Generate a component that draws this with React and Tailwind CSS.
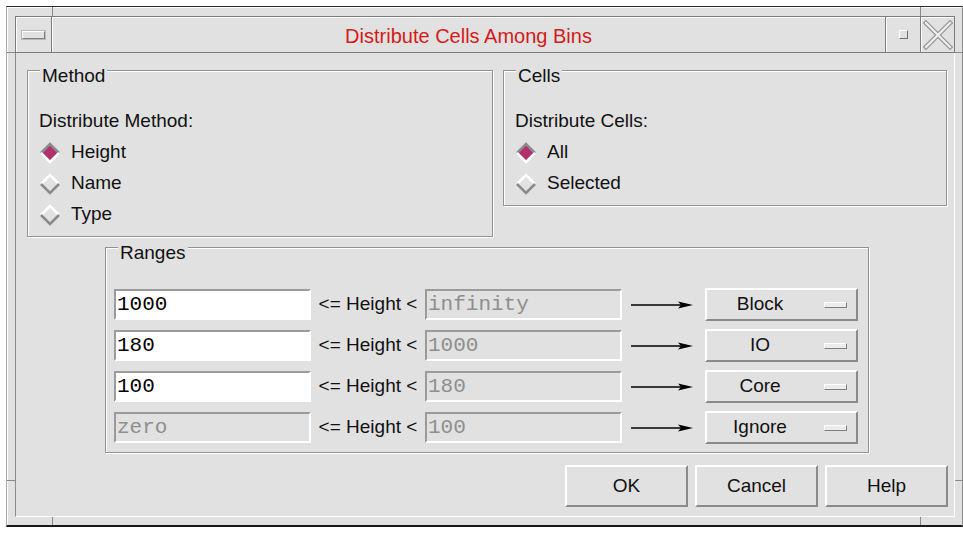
import React from "react";

const BG = "bg-[#e1e1e1]";

function Diamond({ on }) {
  return (
    <svg width="22" height="22" viewBox="0 0 22 22" className="shrink-0">
      <polygon points="11,2 20,11 11,20 2,11" fill={on ? "#b3306a" : "none"} />
      <polyline points="2,11 11,2 20,11" fill="none" stroke={on ? "#8a8a8a" : "#ffffff"} strokeWidth="2.5" />
      <polyline points="2,11 11,20 20,11" fill="none" stroke={on ? "#ffffff" : "#8a8a8a"} strokeWidth="2.5" />
    </svg>
  );
}

function Radio({ on, label }) {
  return (
    <div className="flex h-[31px] items-center gap-[10px]">
      <Diamond on={on} />
      <span>{label}</span>
    </div>
  );
}

function GroupBox({ title, className, children }) {
  return (
    <div
      className={
        "relative border border-[#929292] shadow-[inset_1px_1px_0_#ffffff,1px_1px_0_#ffffff] " +
        className
      }
    >
      <span className={"absolute left-[12px] top-[-6px] px-[2px] leading-[22px] " + BG}>{title}</span>
      {children}
    </div>
  );
}

function Field({ value, enabled }) {
  return (
    <div
      className={
        "flex h-[31px] w-[197px] shrink-0 items-center border-2 border-t-[#9b9b9b] border-l-[#9b9b9b] border-b-white border-r-white pl-[1px] font-['Liberation_Mono','Courier_New',monospace] text-[21px] " +
        (enabled ? "bg-white text-black" : "bg-[#e1e1e1] text-[#8e8e8e]")
      }
    >
      {value}
    </div>
  );
}

function Arrow() {
  return (
    <svg width="63" height="10" viewBox="0 0 63 10" className="ml-[9px] shrink-0">
      <line x1="0" y1="5" x2="54" y2="5" stroke="#000" strokeWidth="1.3" />
      <polygon points="47,1.5 62,5 47,8.5 50,5" fill="#000" />
    </svg>
  );
}

function OptionButton({ label }) {
  return (
    <div className="ml-[11px] flex h-[33px] w-[153px] shrink-0 items-center border-2 border-t-white border-l-white border-b-[#8a8a8a] border-r-[#8a8a8a]">
      <span className="w-[106px] text-center">{label}</span>
      <span className="ml-[11px] h-[6px] w-[23px] border border-t-white border-l-white border-b-[#7f7f7f] border-r-[#7f7f7f] bg-[#ececec]" />
    </div>
  );
}

function RangeRow({ low, lowOn, high, bin }) {
  return (
    <div className="flex h-[31px] items-center">
      <Field value={low} enabled={lowOn} />
      <span className="w-[114px] shrink-0 text-center">&lt;= Height &lt;</span>
      <Field value={high} enabled={false} />
      <Arrow />
      <OptionButton label={bin} />
    </div>
  );
}

function PushButton({ label }) {
  return (
    <div className="flex h-[42px] w-[123px] items-center justify-center border-2 border-t-white border-l-white border-b-[#8a8a8a] border-r-[#8a8a8a]">
      {label}
    </div>
  );
}

export default function App() {
  return (
    <div className="h-[543px] w-[963px] overflow-hidden bg-white pl-[6px] pt-[6px] font-['Liberation_Sans',Arial,sans-serif] text-[19px] text-[#111]">
      {/* window frame */}
      <div
        className={
          "relative flex h-[521px] w-[957px] flex-col border-t border-l border-r border-b-2 border-t-[#2a2a2a] border-l-[#a8a8a8] border-r-[#8a8a8a] border-b-[#1a1a1a] pl-[8px] pr-[7px] pt-[9px] pb-[8px] shadow-[inset_1px_1px_0_#ffffff] " +
          BG
        }
      >
        {/* frame corner ticks */}
        <span className="absolute left-[45px] top-0 h-[9px] w-px bg-[#8a8a8a]" />
        <span className="absolute left-[913px] top-0 h-[9px] w-px bg-[#8a8a8a]" />
        <span className="absolute bottom-0 left-[45px] h-[8px] w-px bg-[#8a8a8a]" />
        <span className="absolute bottom-0 left-[913px] h-[8px] w-px bg-[#8a8a8a]" />
        <span className="absolute left-0 top-[45px] h-px w-[8px] bg-[#8a8a8a]" />
        <span className="absolute left-0 top-[473px] h-px w-[8px] bg-[#8a8a8a]" />
        <span className="absolute right-0 top-[45px] h-px w-[7px] bg-[#8a8a8a]" />
        <span className="absolute right-0 top-[473px] h-px w-[7px] bg-[#8a8a8a]" />

        {/* title bar */}
        <div className="flex h-[37px] shrink-0 border border-[#7c7c7c]">
          <div className="flex w-[36px] items-center justify-center border-r border-[#7c7c7c] shadow-[inset_1px_1px_0_#ffffff]">
            <span className="h-[8px] w-[23px] border border-t-white border-l-white border-b-[#7f7f7f] border-r-[#7f7f7f] shadow-[0_0_0_1px_#b8b8b8]" />
          </div>
          <div className="flex flex-1 items-center justify-center pt-[3px] text-[20px] text-[#d41b1b] shadow-[inset_1px_1px_0_#ffffff]">
            Distribute Cells Among Bins
          </div>
          <div className="flex w-[35px] items-center justify-center border-l border-[#7c7c7c] shadow-[inset_1px_1px_0_#ffffff]">
            <span className="h-[9px] w-[9px] border border-t-white border-l-white border-b-[#6f6f6f] border-r-[#6f6f6f]" />
          </div>
          <div className="flex w-[34px] items-center justify-center border-l border-[#7c7c7c] shadow-[inset_1px_1px_0_#ffffff]">
            <svg width="30" height="30" viewBox="0 0 30 30">
              <path d="M3 3 L27 27 M27 3 L3 27" stroke="#8e8e8e" strokeWidth="4.5" strokeLinecap="square" />
              <path d="M3 3 L27 27 M27 3 L3 27" stroke="#ececec" strokeWidth="2.4" strokeLinecap="square" />
            </svg>
          </div>
        </div>

        {/* dialog content */}
        <div className="flex flex-1 flex-col border-l border-r border-b border-l-[#8c8c8c] border-r-white border-b-white pl-[11px] pr-[6px] pt-[17px]">
          <div className="flex items-start gap-[10px]">
            <GroupBox title="Method" className="h-[167px] w-[466px] pl-[11px] pt-[35px]">
              <div className="flex h-[31px] items-center">Distribute Method:</div>
              <Radio on label="Height" />
              <Radio label="Name" />
              <Radio label="Type" />
            </GroupBox>
            <GroupBox title="Cells" className="h-[136px] w-[444px] pl-[11px] pt-[35px]">
              <div className="flex h-[31px] items-center">Distribute Cells:</div>
              <Radio on label="All" />
              <Radio label="Selected" />
            </GroupBox>
          </div>

          <GroupBox title="Ranges" className="ml-[78px] mt-[10px] h-[206px] w-[764px] pl-[8px] pt-[41px]">
            <div className="flex flex-col gap-[10px]">
              <RangeRow low="1000" lowOn high="infinity" bin="Block" />
              <RangeRow low="180" lowOn high="1000" bin="IO" />
              <RangeRow low="100" lowOn high="180" bin="Core" />
              <RangeRow low="zero" high="100" bin="Ignore" />
            </div>
          </GroupBox>

          <div className="mt-[12px] flex justify-end gap-[7px]">
            <PushButton label="OK" />
            <PushButton label="Cancel" />
            <PushButton label="Help" />
          </div>
        </div>
      </div>
    </div>
  );
}
